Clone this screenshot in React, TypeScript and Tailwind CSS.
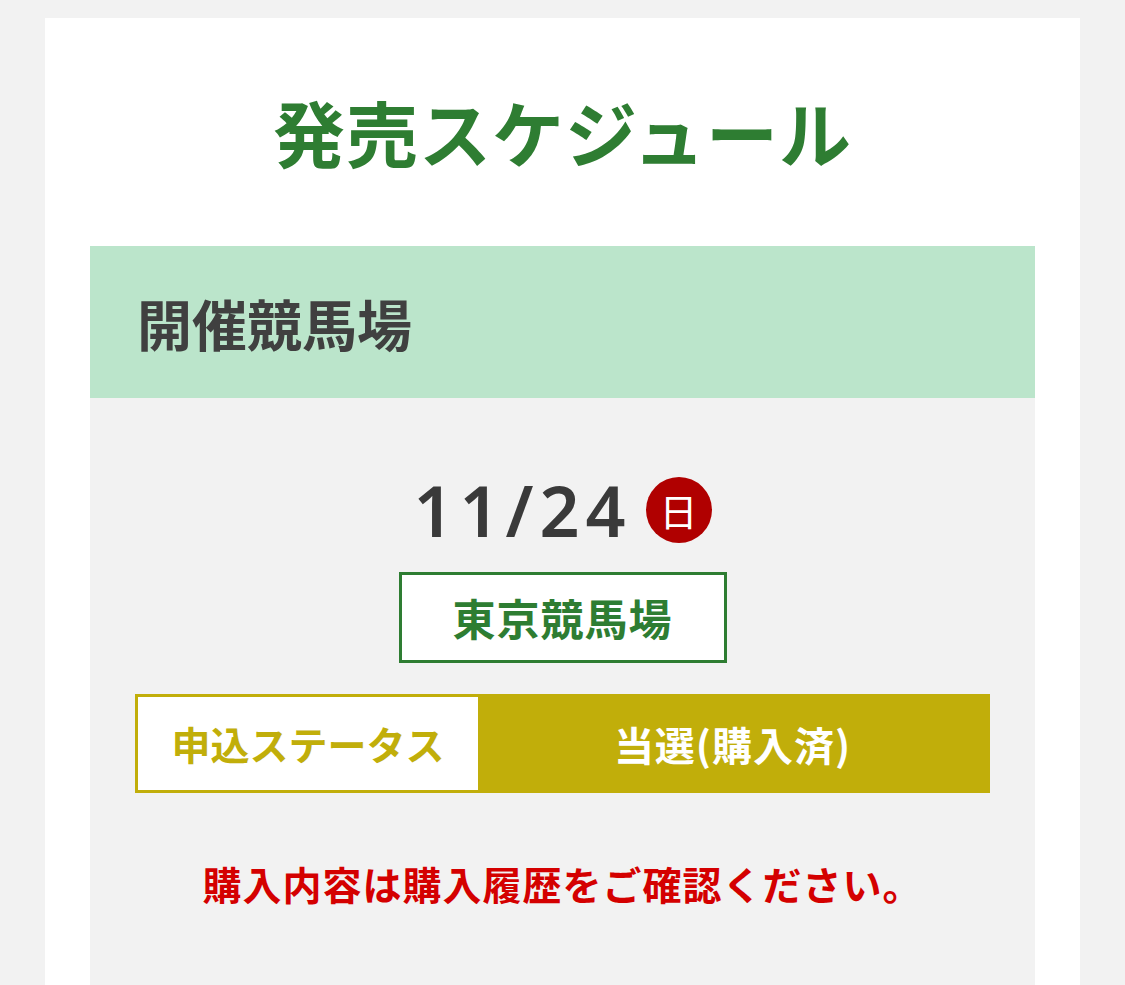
const jp = "font-['Noto_Sans_CJK_JP','Noto_Sans',sans-serif]";

export default function App() {
  return (
    <div className={`min-h-[985px] bg-[#f2f2f2] px-[45px] pt-[18px] ${jp}`}>
      <div className="bg-white px-[45px] pb-0">
        {/* title */}
        <h1 className="pt-[70px] pb-[72px] text-center text-[72px] font-bold leading-[86px] tracking-[1px] text-[#2e7d32]">
          発売スケジュール
        </h1>

        {/* venue header */}
        <div className="flex h-[152px] items-center bg-[#bbe5cb] pl-[47px]">
          <h2 className="text-[55px] font-bold leading-none text-[#404040]">開催競馬場</h2>
        </div>

        {/* venue body */}
        <div className="bg-[#f2f2f2] px-[45px] pt-[70px] pb-[120px]">
          <div className="flex h-[84px] items-center justify-center gap-[14px]">
            <span className="font-['Noto_Sans','Liberation_Sans',sans-serif] text-[70px] font-semibold leading-none tracking-[6px] text-[#3a3a3a]">
              11/24
            </span>
            <span className="flex h-[66px] w-[66px] items-center justify-center rounded-full bg-[#b00000] text-[38px] leading-none text-white">
              日
            </span>
          </div>

          <div className="mt-[20px] flex justify-center">
            <div className="flex h-[91px] w-[328px] items-center justify-center border-[3px] border-[#2e7d32] bg-white text-[43px] font-bold tracking-[1px] text-[#2e7d32]">
              東京競馬場
            </div>
          </div>

          <div className="mt-[31px] flex h-[99px] border-[3px] border-[#c1ae0a]">
            <div className="flex w-[340px] items-center justify-center bg-white text-[39px] font-bold text-[#c1ae0a]">
              申込ステータス
            </div>
            <div className="flex flex-1 items-center justify-center bg-[#c1ae0a] text-[40px] font-bold tracking-[1px] text-white">
              当選(購入済)
            </div>
          </div>

          <p className="mt-[66px] text-center text-[39px] font-bold leading-[48px] tracking-[1px] text-[#d40000]">
            購入内容は購入履歴をご確認ください。
          </p>
        </div>
      </div>
    </div>
  );
}
